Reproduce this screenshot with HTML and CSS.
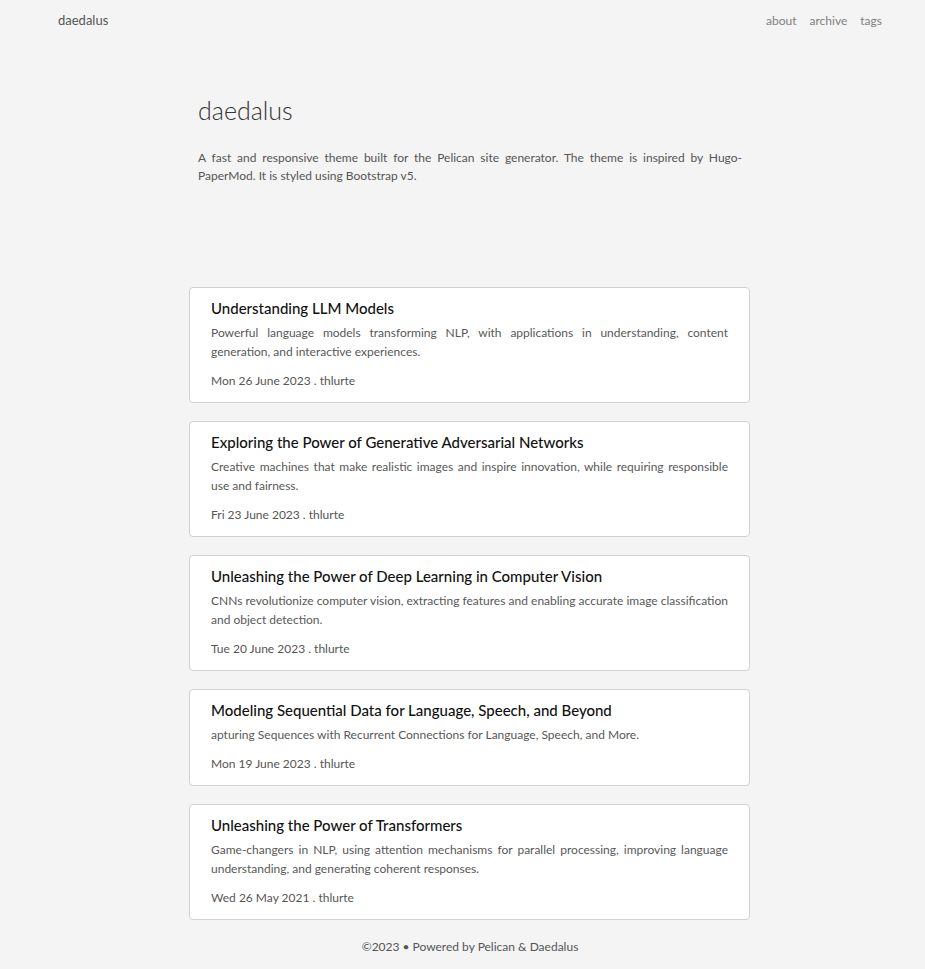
FILE: index.html
```html
<!DOCTYPE html>
<html lang="en">
<head>
<meta charset="utf-8">
<title>daedalus</title>
<link rel="stylesheet" href="styles.css">
</head>
<body>
<header class="site-header">
  <a class="brand" href="#">daedalus</a>
  <nav class="nav">
    <a href="#">about</a>
    <a href="#">archive</a>
    <a href="#">tags</a>
  </nav>
</header>
<main class="main">
  <section class="hero">
    <h1 class="hero-title">daedalus</h1>
    <p class="hero-text">A fast and responsive theme built for the Pelican site generator. The theme is inspired by Hugo-PaperMod. It is styled using Bootstrap v5.</p>
  </section>
  <section class="posts">
    <article class="card">
      <h2 class="card-title">Understanding LLM Models</h2>
      <p class="card-text">Powerful language models transforming NLP, with applications in understanding, content generation, and interactive experiences.</p>
      <p class="card-meta">Mon 26 June 2023 . thlurte</p>
    </article>
    <article class="card">
      <h2 class="card-title">Exploring the Power of Generative Adversarial Networks</h2>
      <p class="card-text">Creative machines that make realistic images and inspire innovation, while requiring responsible use and fairness.</p>
      <p class="card-meta">Fri 23 June 2023 . thlurte</p>
    </article>
    <article class="card">
      <h2 class="card-title">Unleashing the Power of Deep Learning in Computer Vision</h2>
      <p class="card-text">CNNs revolutionize computer vision, extracting features and enabling accurate image classification and object detection.</p>
      <p class="card-meta">Tue 20 June 2023 . thlurte</p>
    </article>
    <article class="card">
      <h2 class="card-title">Modeling Sequential Data for Language, Speech, and Beyond</h2>
      <p class="card-text">apturing Sequences with Recurrent Connections for Language, Speech, and More.</p>
      <p class="card-meta">Mon 19 June 2023 . thlurte</p>
    </article>
    <article class="card">
      <h2 class="card-title">Unleashing the Power of Transformers</h2>
      <p class="card-text">Game-changers in NLP, using attention mechanisms for parallel processing, improving language understanding, and generating coherent responses.</p>
      <p class="card-meta">Wed 26 May 2021 . thlurte</p>
    </article>
  </section>
</main>
<footer class="footer">©2023 • Powered by Pelican &amp; Daedalus</footer>
</body>
</html>
```

FILE: styles.css
```css
* { box-sizing: border-box; }
html, body { margin: 0; padding: 0; }
body {
  background: #f4f4f4;
  font-family: Lato, "Noto Sans", sans-serif;
  color: #333;
  font-size: 12px;
}
a { text-decoration: none; }
.site-header {
  display: flex;
  justify-content: space-between;
  align-items: center;
  padding: 0 43px 0 58px;
  height: 40px;
}
.brand { color: #555; font-size: 13px; }
.nav { display: flex; gap: 13px; }
.nav a { color: #808080; font-size: 12px; }
.main {
  width: 561px;
  margin-left: calc(50% - 273.5px);
}
.hero {
  padding: 55px 8px 0 9px;
  height: 247px;
}
.hero-title {
  margin: 0;
  font-size: 25px;
  font-weight: 300;
  color: #333;
  line-height: 30px;
}
.hero-text {
  margin: 24px 0 0;
  font-size: 12px;
  line-height: 18px;
  text-align: justify;
  color: #555;
}
.posts { display: flex; flex-direction: column; gap: 18px; }
.card {
  background: #fff;
  border: 1px solid #d2d2d2;
  border-radius: 4px;
  padding: 8px 21px 12px;
}
.card-title {
  margin: 0 0 3px;
  font-size: 15px;
  font-weight: 500;
  line-height: 24px;
  color: #111;
}
.card-text {
  margin: 0;
  font-size: 12px;
  line-height: 19px;
  text-align: justify;
  color: #585858;
}
.card-meta {
  margin: 10px 0 0;
  font-size: 12px;
  line-height: 19px;
  color: #555;
}
.footer {
  text-align: center;
  color: #555;
  font-size: 12px;
  padding: 18px 0 12px 15px;
  line-height: 18px;
}
```
